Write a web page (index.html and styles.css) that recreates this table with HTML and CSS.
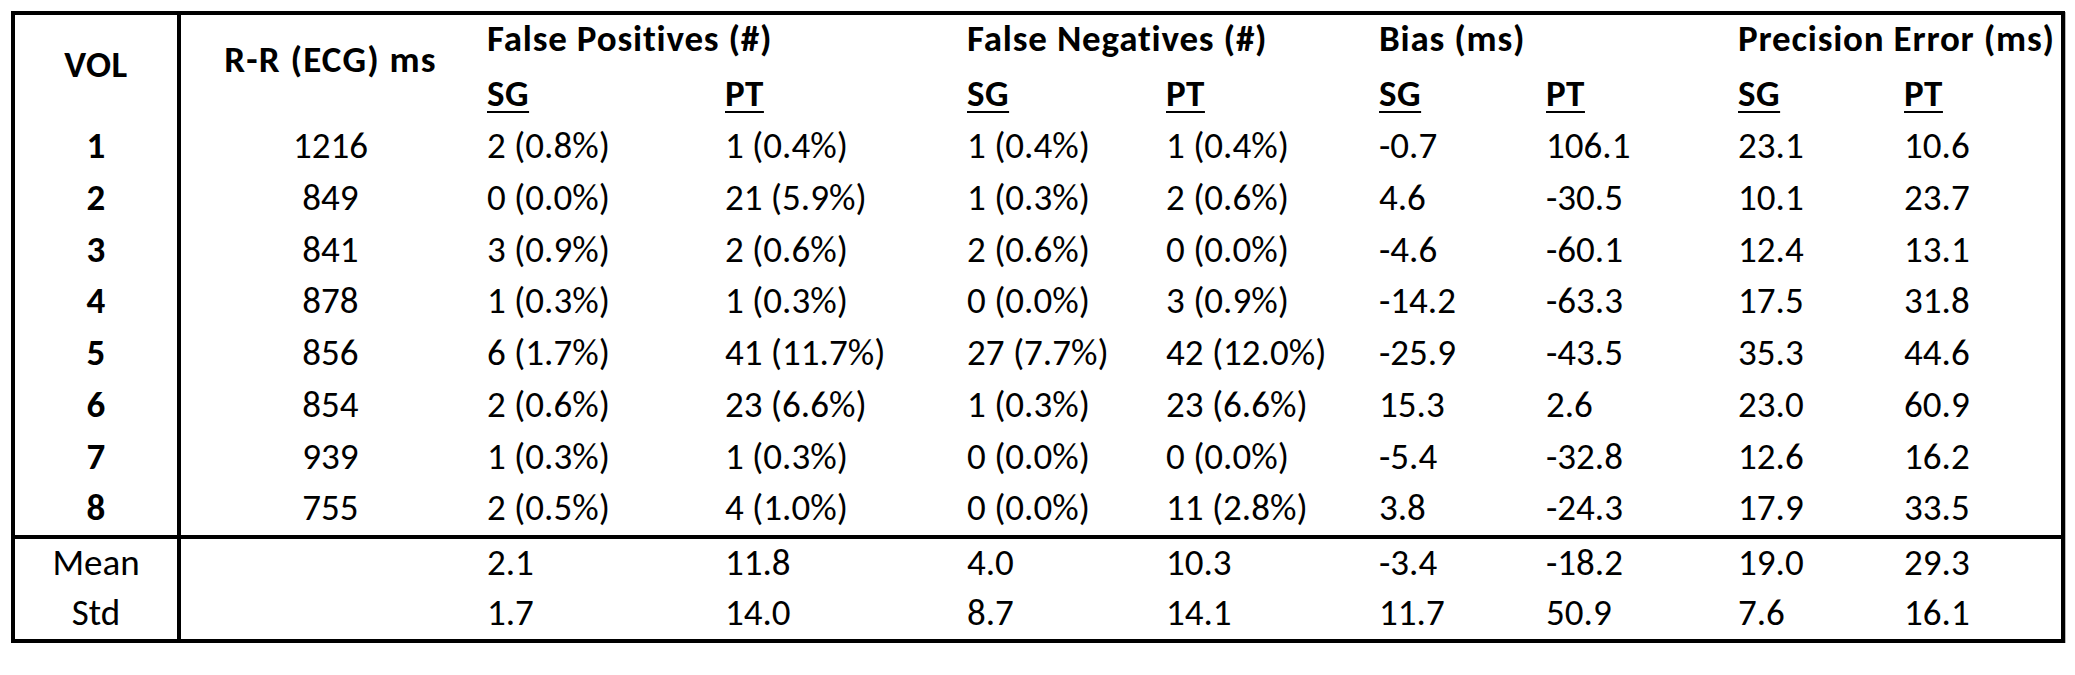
FILE: index.html
```html
<!DOCTYPE html>
<html>
<head>
<meta charset="utf-8">
<link rel="stylesheet" href="styles.css">
</head>
<body>
<table class="results">
  <colgroup>
    <col class="c-vol"><col class="c-rr"><col class="c-fps"><col class="c-fpp"><col class="c-fns"><col class="c-fnp"><col class="c-bs"><col class="c-bp"><col class="c-ps"><col class="c-pp">
  </colgroup>
  <thead>
    <tr class="hrow1">
      <th rowspan="2" class="vol vol-head">VOL</th>
      <th rowspan="2" class="rr rr-head">R-R (ECG) ms</th>
      <th colspan="2" class="grp">False Positives (#)</th>
      <th colspan="2" class="grp">False Negatives (#)</th>
      <th colspan="2" class="grp">Bias (ms)</th>
      <th colspan="2" class="grp">Precision Error (ms)</th>
    </tr>
    <tr class="hrow2">
      <th class="sub"><span>SG</span></th><th class="sub"><span>PT</span></th>
      <th class="sub"><span>SG</span></th><th class="sub"><span>PT</span></th>
      <th class="sub"><span>SG</span></th><th class="sub"><span>PT</span></th>
      <th class="sub"><span>SG</span></th><th class="sub"><span>PT</span></th>
    </tr>
  </thead>
  <tbody>
    <tr><th class="vol">1</th><td class="rr">1216</td><td>2 (0.8%)</td><td>1 (0.4%)</td><td>1 (0.4%)</td><td>1 (0.4%)</td><td>-0.7</td><td>106.1</td><td>23.1</td><td>10.6</td></tr>
    <tr><th class="vol">2</th><td class="rr">849</td><td>0 (0.0%)</td><td>21 (5.9%)</td><td>1 (0.3%)</td><td>2 (0.6%)</td><td>4.6</td><td>-30.5</td><td>10.1</td><td>23.7</td></tr>
    <tr><th class="vol">3</th><td class="rr">841</td><td>3 (0.9%)</td><td>2 (0.6%)</td><td>2 (0.6%)</td><td>0 (0.0%)</td><td>-4.6</td><td>-60.1</td><td>12.4</td><td>13.1</td></tr>
    <tr class="short"><th class="vol">4</th><td class="rr">878</td><td>1 (0.3%)</td><td>1 (0.3%)</td><td>0 (0.0%)</td><td>3 (0.9%)</td><td>-14.2</td><td>-63.3</td><td>17.5</td><td>31.8</td></tr>
    <tr><th class="vol">5</th><td class="rr">856</td><td>6 (1.7%)</td><td>41 (11.7%)</td><td>27 (7.7%)</td><td>42 (12.0%)</td><td>-25.9</td><td>-43.5</td><td>35.3</td><td>44.6</td></tr>
    <tr><th class="vol">6</th><td class="rr">854</td><td>2 (0.6%)</td><td>23 (6.6%)</td><td>1 (0.3%)</td><td>23 (6.6%)</td><td>15.3</td><td>2.6</td><td>23.0</td><td>60.9</td></tr>
    <tr><th class="vol">7</th><td class="rr">939</td><td>1 (0.3%)</td><td>1 (0.3%)</td><td>0 (0.0%)</td><td>0 (0.0%)</td><td>-5.4</td><td>-32.8</td><td>12.6</td><td>16.2</td></tr>
    <tr class="short"><th class="vol">8</th><td class="rr">755</td><td>2 (0.5%)</td><td>4 (1.0%)</td><td>0 (0.0%)</td><td>11 (2.8%)</td><td>3.8</td><td>-24.3</td><td>17.9</td><td>33.5</td></tr>
  </tbody>
  <tfoot>
    <tr class="mean"><td class="stat">Mean</td><td class="rr"></td><td>2.1</td><td>11.8</td><td>4.0</td><td>10.3</td><td>-3.4</td><td>-18.2</td><td>19.0</td><td>29.3</td></tr>
    <tr class="std"><td class="stat">Std</td><td class="rr"></td><td>1.7</td><td>14.0</td><td>8.7</td><td>14.1</td><td>11.7</td><td>50.9</td><td>7.6</td><td>16.1</td></tr>
  </tfoot>
</table>
</body>
</html>
```

FILE: styles.css
```css
html, body {
  margin: 0;
  padding: 0;
  background: #ffffff;
}
body {
  padding: 11px 0 0 11px;
  font-family: Calibri, Carlito, Lato, "Liberation Sans", sans-serif;
  color: #000;
}
.results {
  border-collapse: separate;
  border-spacing: 0;
  table-layout: fixed;
  width: 2054px;
  border: 4px solid #000;
  font-size: 37px;
  line-height: 1.2;
  box-shadow: 1px 1px 0 #b8b8b8;
}
.c-vol { width: 162px; }
.c-rr { width: 303px; }
.c-fps { width: 238px; }
.c-fpp { width: 242px; }
.c-fns { width: 199px; }
.c-fnp { width: 213px; }
.c-bs { width: 167px; }
.c-bp { width: 192px; }
.c-ps { width: 166px; }
.c-pp { width: 164px; }

.results th, .results td {
  box-sizing: border-box;
  padding: 0 0 2px 7px;
  text-align: left;
  vertical-align: middle;
  white-space: nowrap;
  height: 52px;
  font-weight: 400;
}
.results tr.short th, .results tr.short td { height: 51px; }
.results th { font-weight: 700; }
.results .vol, .results .stat {
  text-align: center;
  padding: 0 0 2px 0;
}
.results .rr {
  text-align: center;
  padding: 0 0 2px 0;
  border-left: 4px solid #000;
}
.results .hrow1 th.grp { height: 54px; padding-bottom: 6px; letter-spacing: 0.8px; }
.results .vol-head { padding-bottom: 6px; letter-spacing: 0.5px; }
.results .rr-head { padding-bottom: 16px; letter-spacing: 1.2px; }
.results .hrow2 th { height: 52px; }
.sub span {
  letter-spacing: 0.5px;
  text-decoration: underline;
  text-decoration-thickness: 2px;
  text-underline-offset: 5px;
}
.results .mean td { border-top: 4px solid #000; height: 54px; }
.results .std td { height: 50px; }
```
